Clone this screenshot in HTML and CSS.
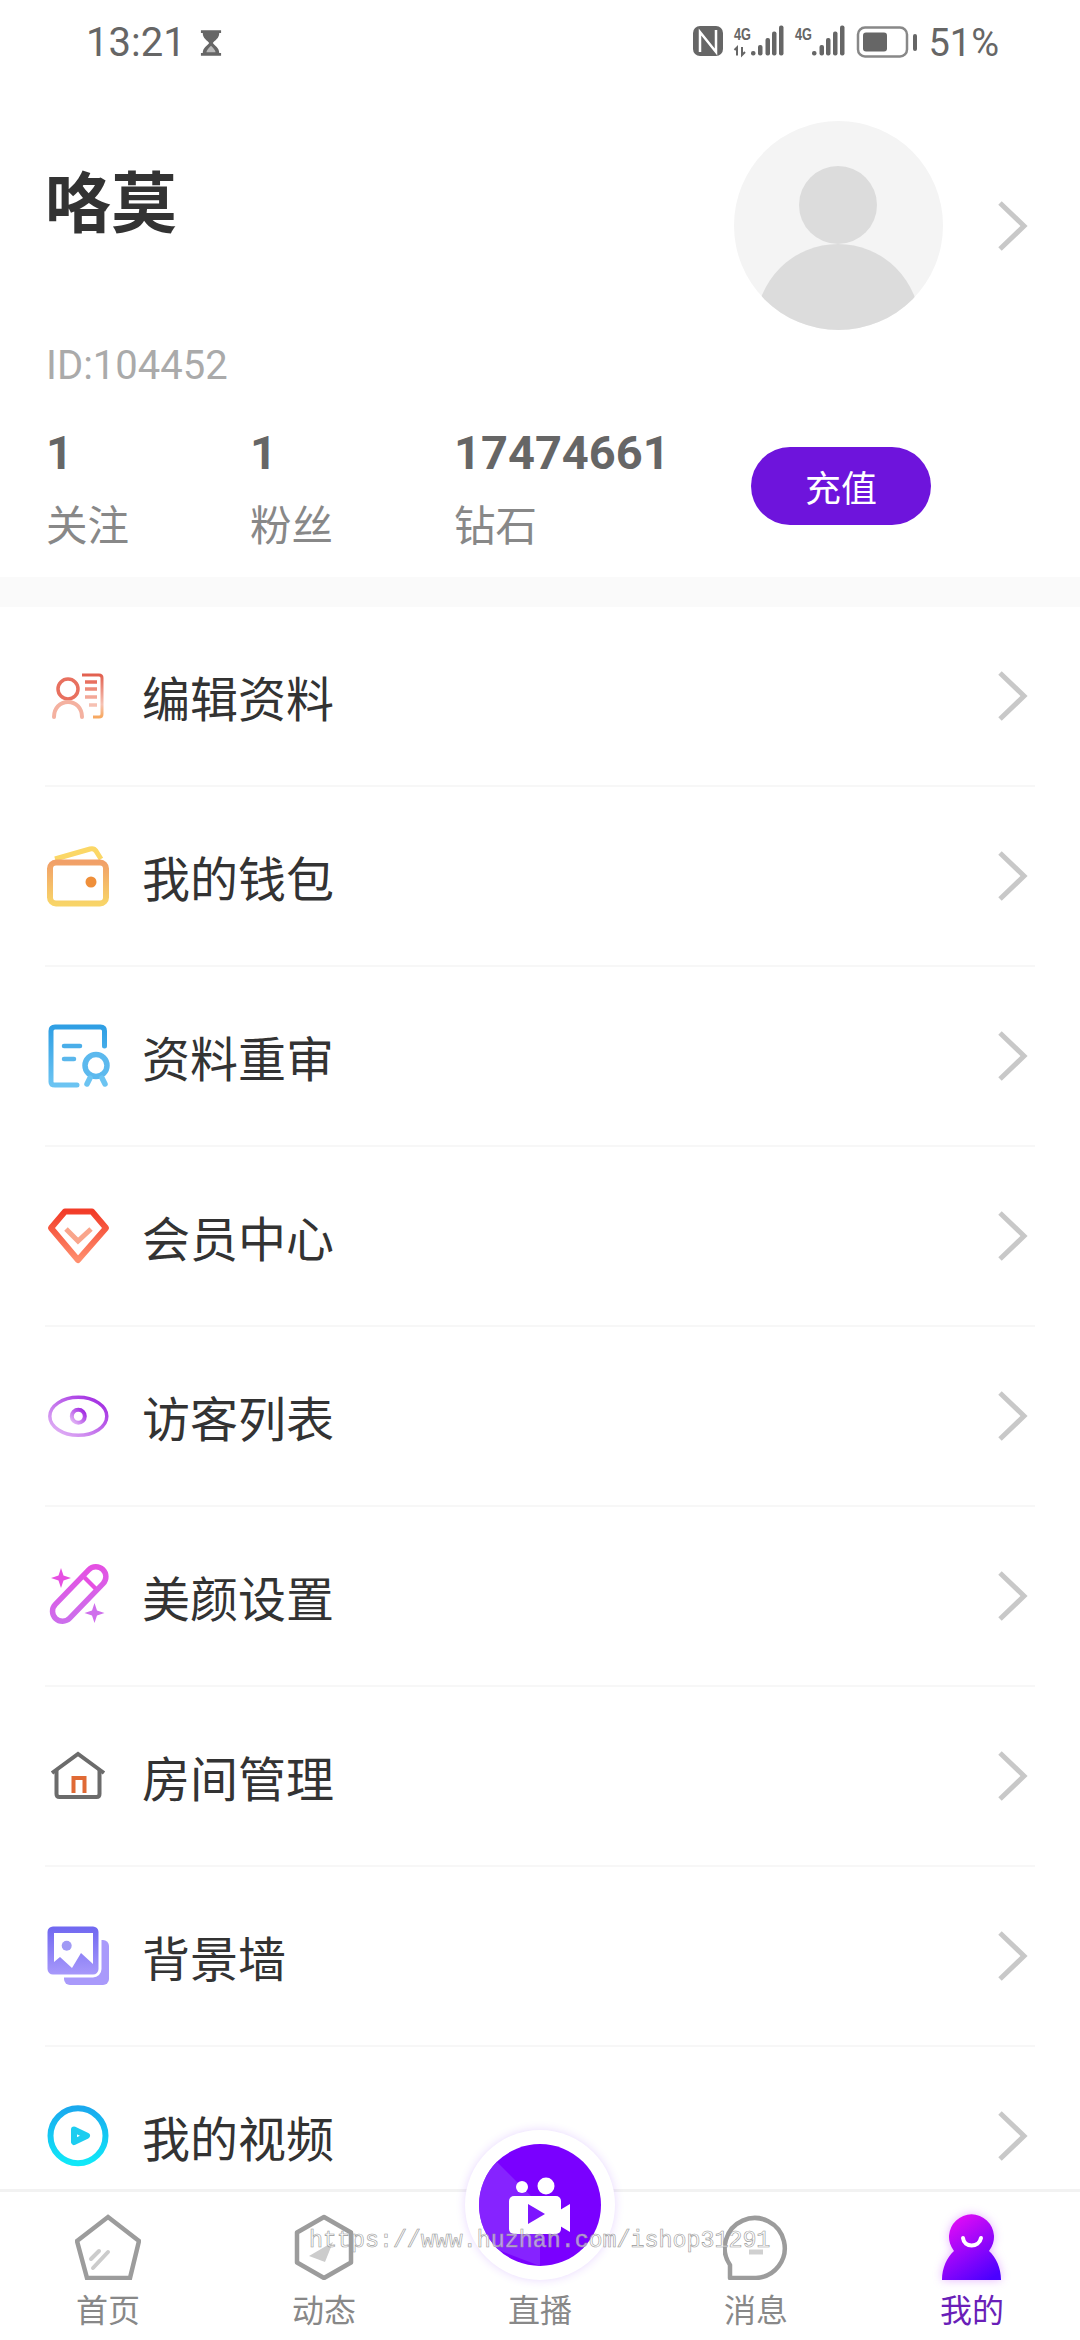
FILE: index.html
```html
<!DOCTYPE html>
<html lang="zh-CN">
<head>
    <meta charset="UTF-8">
    <title>我的</title>
    <link rel="stylesheet" href="styles.css">
</head>
<body>

<div class="page">
    <header class="status">
        <div class="status-left">
            <span class="clock">13:21</span>
            <svg width="22" height="30" viewBox="0 0 24 30"><path d="M1 1h22v3h-2c0 6-5 8-7 11 2 3 7 5 7 11h2v3H1v-3h2c0-6 5-8 7-11-2-3-7-5-7-11H1z" fill="#666"/><path d="M7 25c0-2 3-5 5-7 2 2 5 5 5 7z" fill="#fff" opacity=".55"/></svg>
        </div>
        <div class="status-right">
            <svg width="228" height="40" viewBox="0 0 228 40">
                <rect x="7" y="3" width="30" height="30" rx="7" fill="#666"/>
                <path d="M14 29V9l16 20V7" fill="none" stroke="#fff" stroke-width="2.5"/>
                <text class="net" x="48" y="16.500" textLength="17" lengthAdjust="spacingAndGlyphs">4G</text>
                <path d="M51 32.500v-8l-2.500 2.500M56 24v8l3-3" fill="none" stroke="#666" stroke-width="2"/>
                <g fill="#666">
                    <rect x="65" y="28" width="4.500" height="4.500" rx="2"/><rect x="72" y="22" width="4.500" height="10.500" rx="2"/><rect x="79.500" y="15" width="4.500" height="17.500" rx="2"/><rect x="86" y="8.500" width="4.500" height="24" rx="2"/><rect x="93" y="2.500" width="4.500" height="30" rx="2"/>
                </g>
                <text class="net" x="109" y="16.500" textLength="17" lengthAdjust="spacingAndGlyphs">4G</text>
                <g fill="#666">
                    <rect x="126" y="28" width="4.500" height="4.500" rx="2"/><rect x="133.500" y="22" width="4.500" height="10.500" rx="2"/><rect x="140" y="15" width="4.500" height="17.500" rx="2"/><rect x="147" y="8.500" width="4.500" height="24" rx="2"/><rect x="154" y="2.500" width="4.500" height="30" rx="2"/>
                </g>
                <rect x="172" y="4.500" width="49" height="29" rx="7" fill="none" stroke="#888" stroke-width="2.500"/>
                <rect x="177" y="9.500" width="24" height="19" rx="3" fill="#666"/>
            </svg>
            <span class="cap"></span>
            <span class="battery">51%</span>
        </div>
    </header>

    <section class="profile">
        <div class="profile-top">
            <h1 class="name">咯莫</h1>
            <svg class="avatar" width="209" height="209" viewBox="0 0 209 209">
                <defs><clipPath id="avatarClip"><circle cx="104.500" cy="104.500" r="104.500"/></clipPath></defs>
                <circle cx="104.500" cy="104.500" r="104.500" fill="#f4f4f4"/>
                <g clip-path="url(#avatarClip)" fill="#dcdcdc">
                    <circle cx="104" cy="84" r="39"/>
                    <ellipse cx="104" cy="205" rx="82" ry="82"/>
                </g>
            </svg>
            <svg class="chev" width="30" height="50" viewBox="0 0 30 50"><path d="M2 2l24 23L2 48" fill="none" stroke="#c8c8c8" stroke-width="5"/></svg>
        </div>
        <p class="uid">ID:104452</p>
        <div class="stats">
            <div class="stat"><b>1</b><span>关注</span></div>
            <div class="stat"><b>1</b><span>粉丝</span></div>
            <div class="stat stat-wide"><b>17474661</b><span>钻石</span></div>
            <button class="recharge">充值</button>
        </div>
    </section>

    <main class="menu">
        <div class="row">
            <svg class="ico" width="66" height="66" viewBox="0 0 66 66">
                <defs><linearGradient id="g1" x1="0" y1="0" x2="0" y2="1"><stop offset="0" stop-color="#e2604f"/><stop offset=".7" stop-color="#f6c3b4"/><stop offset="1" stop-color="#f7a860"/></linearGradient></defs>
                <circle cx="24" cy="26" r="10" fill="none" stroke="#e8705f" stroke-width="3.500"/>
                <path d="M10 54c0-9 6-15 14-15s14 6 14 15" fill="none" stroke="#f4b1a0" stroke-width="4" stroke-linecap="round"/>
                <path d="M38 12h17q3 0 3 3v36q0 3-3 3h-6" fill="none" stroke="url(#g1)" stroke-width="3"/>
                <path d="M41 19h12" stroke="#e8705f" stroke-width="3.500"/><path d="M41 26h12" stroke="#ec8a78" stroke-width="3.500"/><path d="M41 34h12" stroke="#f3a797" stroke-width="3.500"/><path d="M45 42h8" stroke="#f6c0b2" stroke-width="3.500"/>
            </svg>
            <span class="label">编辑资料</span>
            <svg class="chev" width="30" height="50" viewBox="0 0 30 50"><path d="M2 2l24 23L2 48" fill="none" stroke="#c8c8c8" stroke-width="5"/></svg>
        </div>
        <div class="row">
            <svg class="ico" width="66" height="66" viewBox="0 0 66 66">
                <defs><linearGradient id="g2" x1="0" y1="0" x2="0" y2="1"><stop offset="0" stop-color="#f1a068"/><stop offset="1" stop-color="#f8d468"/></linearGradient></defs>
                <path d="M11 16l35-10q4-1 6 2l5 8" fill="none" stroke="#fbd766" stroke-width="5"/>
                <rect x="6" y="19.500" width="56" height="41" rx="6" fill="#fff" stroke="url(#g2)" stroke-width="6"/>
                <circle cx="47" cy="39" r="5.500" fill="#ef8f3a"/>
            </svg>
            <span class="label">我的钱包</span>
            <svg class="chev" width="30" height="50" viewBox="0 0 30 50"><path d="M2 2l24 23L2 48" fill="none" stroke="#c8c8c8" stroke-width="5"/></svg>
        </div>
        <div class="row">
            <svg class="ico" width="66" height="66" viewBox="0 0 66 66">
                <defs><linearGradient id="g3" x1="0" y1="0" x2="0" y2="1"><stop offset="0" stop-color="#2f9fe4"/><stop offset="1" stop-color="#6cc4f2"/></linearGradient></defs>
                <path d="M60.500 23V8q0-4-4-4H11q-4 0-4 4v51q0 3 4 3h22" fill="none" stroke="url(#g3)" stroke-width="5" stroke-linecap="round"/>
                <path d="M20 23h16" stroke="#4aaee9" stroke-width="4.500" stroke-linecap="round"/>
                <path d="M20 36h10" stroke="#5ab7ec" stroke-width="4.500" stroke-linecap="round"/>
                <circle cx="52" cy="42.500" r="11" fill="none" stroke="#5cb9ee" stroke-width="5.500"/>
                <path d="M46 55l-3 6M58 55l3 6" stroke="#6cc4f2" stroke-width="5.500" stroke-linecap="round"/>
            </svg>
            <span class="label">资料重审</span>
            <svg class="chev" width="30" height="50" viewBox="0 0 30 50"><path d="M2 2l24 23L2 48" fill="none" stroke="#c8c8c8" stroke-width="5"/></svg>
        </div>
        <div class="row">
            <svg class="ico" width="66" height="66" viewBox="0 0 66 66">
                <defs><linearGradient id="g4" x1="0" y1="0" x2="0" y2="1"><stop offset="0" stop-color="#f23c28"/><stop offset="1" stop-color="#ff8e6e"/></linearGradient></defs>
                <path d="M21 8.500h27l14 16.500-28 32L7 25z" fill="none" stroke="url(#g4)" stroke-width="6" stroke-linejoin="round"/>
                <path d="M22 26l12 12 13-12" fill="none" stroke="#f9a58b" stroke-width="5"/>
            </svg>
            <span class="label">会员中心</span>
            <svg class="chev" width="30" height="50" viewBox="0 0 30 50"><path d="M2 2l24 23L2 48" fill="none" stroke="#c8c8c8" stroke-width="5"/></svg>
        </div>
        <div class="row">
            <svg class="ico" width="66" height="66" viewBox="0 0 66 66">
                <defs><linearGradient id="g5" x1="1" y1="0" x2="0" y2="1"><stop offset="0" stop-color="#9c1fe0"/><stop offset="1" stop-color="#e6bdf7"/></linearGradient></defs>
                <ellipse cx="34.300" cy="33.300" rx="28.500" ry="19" fill="none" stroke="url(#g5)" stroke-width="3.500"/>
                <circle cx="34.300" cy="33.300" r="6.500" fill="none" stroke="url(#g5)" stroke-width="4"/>
            </svg>
            <span class="label">访客列表</span>
            <svg class="chev" width="30" height="50" viewBox="0 0 30 50"><path d="M2 2l24 23L2 48" fill="none" stroke="#c8c8c8" stroke-width="5"/></svg>
        </div>
        <div class="row">
            <svg class="ico" width="66" height="66" viewBox="0 0 66 66">
                <defs><linearGradient id="g6" gradientUnits="userSpaceOnUse" x1="50" y1="8" x2="15" y2="58"><stop offset="0" stop-color="#e64fe2"/><stop offset="1" stop-color="#c874ee"/></linearGradient></defs>
                <rect x="1.200" y="21" width="68" height="20" rx="10" transform="rotate(-46 35.200 31)" fill="none" stroke="url(#g6)" stroke-width="5.500"/>
                <path d="M42 13l11 11-3 3-11-11z" fill="#e64fe2"/>
                <path d="M17 5l2.500 7.500L27 15l-7.500 2.500L17 25l-2.500-7.500L7 15l7.500-2.500z" fill="#e64fe2"/>
                <path d="M50.500 40l2.500 7.500L60.500 50l-7.500 2.500L50.500 60l-2.500-7.500L40.500 50l7.500-2.500z" fill="#cf6fec"/>
            </svg>
            <span class="label">美颜设置</span>
            <svg class="chev" width="30" height="50" viewBox="0 0 30 50"><path d="M2 2l24 23L2 48" fill="none" stroke="#c8c8c8" stroke-width="5"/></svg>
        </div>
        <div class="row">
            <svg class="ico" width="66" height="66" viewBox="0 0 66 66">
                <path d="M8 30L34 11l26 19" fill="none" stroke="#6b6b6b" stroke-width="4"/>
                <path d="M12.500 27v24q0 3 3 3h37q3 0 3-3V27" fill="none" stroke="#6b6b6b" stroke-width="4"/>
                <path d="M29.500 50V35h11v15" fill="none" stroke="#e06a35" stroke-width="4"/>
            </svg>
            <span class="label">房间管理</span>
            <svg class="chev" width="30" height="50" viewBox="0 0 30 50"><path d="M2 2l24 23L2 48" fill="none" stroke="#c8c8c8" stroke-width="5"/></svg>
        </div>
        <div class="row">
            <svg class="ico" width="66" height="66" viewBox="0 0 66 66">
                <defs><linearGradient id="g8" x1="0" y1="0" x2="0" y2="1"><stop offset="0" stop-color="#6e66f0"/><stop offset="1" stop-color="#a99afb"/></linearGradient></defs>
                <rect x="20" y="17" width="45" height="45" rx="6" fill="#a99afb"/>
                <rect x="2" y="2" width="54" height="51" rx="7" fill="url(#g8)" stroke="#fff" stroke-width="3"/>
                <path d="M10 10h39v31L37 30l-9 15-12-11-6 5z" fill="#fff"/>
                <circle cx="22.700" cy="22.700" r="5" fill="#a09af5"/>
            </svg>
            <span class="label">背景墙</span>
            <svg class="chev" width="30" height="50" viewBox="0 0 30 50"><path d="M2 2l24 23L2 48" fill="none" stroke="#c8c8c8" stroke-width="5"/></svg>
        </div>
        <div class="row">
            <svg class="ico" width="66" height="66" viewBox="0 0 66 66">
                <defs><linearGradient id="g9" x1="0" y1="0" x2="0" y2="1"><stop offset="0" stop-color="#1aa9ee"/><stop offset="1" stop-color="#10e8f8"/></linearGradient></defs>
                <circle cx="34" cy="32.700" r="27.500" fill="none" stroke="url(#g9)" stroke-width="6"/>
                <path d="M30 26.500L43 32.700 30 39z" fill="#fff" stroke="#1dcdf0" stroke-width="6" stroke-linejoin="round"/>
            </svg>
            <span class="label">我的视频</span>
            <svg class="chev" width="30" height="50" viewBox="0 0 30 50"><path d="M2 2l24 23L2 48" fill="none" stroke="#c8c8c8" stroke-width="5"/></svg>
        </div>
    </main>

    <nav class="tabs">
        <div class="tab">
            <svg width="66" height="66" viewBox="0 0 66 66">
                <path d="M33 3l31 24-9 37H12L2 27z" fill="none" stroke="#9c9c9c" stroke-width="4.500"/>
                <path d="M16 45l8-8M18 54l15-16" stroke="#ccc" stroke-width="4" stroke-linecap="round"/>
            </svg>
            <span>首页</span>
        </div>
        <div class="tab">
            <svg width="66" height="66" viewBox="0 0 66 66">
                <path d="M33 3l27 15.500v30L33 64 6 48.500v-30z" fill="none" stroke="#9c9c9c" stroke-width="4.500" stroke-linejoin="round"/>
                <path d="M18 42l24-14-8 20z" fill="#ccc"/>
            </svg>
            <span>动态</span>
        </div>
        <div class="tab">
            <div class="tab-gap"></div>
            <span>直播</span>
        </div>
        <div class="tab">
            <svg width="66" height="66" viewBox="0 0 66 66">
                <path d="M7 64V51A30 30 0 1 1 33 64z" fill="none" stroke="#9c9c9c" stroke-width="4.500" stroke-linejoin="round"/>
                <path d="M26 38h14" stroke="#d0d0d0" stroke-width="5"/>
            </svg>
            <span>消息</span>
        </div>
        <div class="tab tab-on">
            <svg class="me" width="66" height="66" viewBox="0 0 66 66">
                <defs><linearGradient id="gMe" x1=".2" y1="0" x2=".8" y2="1"><stop offset="0" stop-color="#e80cf5"/><stop offset="1" stop-color="#4a00ff"/></linearGradient></defs>
                <path d="M3 66c0-12 5-23 12-29a22.500 22.500 0 1 1 35 0c7 6 12 17 12 29z" fill="url(#gMe)"/>
                <path d="M24 24c1 10 16 10 18 0" fill="none" stroke="#fff" stroke-width="4" stroke-linecap="round"/>
            </svg>
            <span>我的</span>
        </div>
    </nav>

    <div class="live">
        <div class="live-inner">
            <svg width="122" height="122" viewBox="0 0 122 122">
                <path d="M61 61L17 17A61 61 0 0 0 17 105L61 122z" fill="#8a2cff" opacity=".8"/>
                <circle cx="43" cy="43" r="6" fill="#fff"/>
                <circle cx="67" cy="42" r="8.500" fill="#fff"/>
                <rect x="30" y="52" width="52" height="38" rx="5" fill="#fff"/>
                <path d="M81 66l10-6v28l-10-6z" fill="#fff"/>
                <path d="M49 60l17 10-17 10z" fill="#7d14ff"/>
            </svg>
        </div>
    </div>

    <div class="watermark">https://www.huzhan.com/ishop31291</div>
</div>

</body>
</html>
```

FILE: styles.css
```css
* {
    box-sizing: border-box;
}
body {
    margin: 0;
    background-color: #fff;
    font-family: Roboto, "Noto Sans CJK SC", sans-serif;
}
.page {
    position: relative;
    width: 1080px;
    height: 2340px;
    display: flex;
    flex-direction: column;
    overflow: hidden;
}

/* status bar */
.status {
    height: 85px;
    flex: none;
    display: flex;
    justify-content: space-between;
    align-items: center;
    color: #666;
    padding: 0 81px 0 86px;
}
.status-left {
    display: flex;
    align-items: center;
    gap: 14px;
}
.clock {
    font-size: 40px;
}
.status-right {
    display: flex;
    align-items: center;
}
.net {
    font-family: "Liberation Sans", sans-serif;
    font-size: 17px;
    font-weight: bold;
    fill: #666;
}
.cap {
    width: 4px;
    height: 17px;
    margin-left: -1px;
    margin-right: 11px;
    background-color: #666;
    border-radius: 2px;
}
.battery {
    font-size: 38px;
}

/* profile head */
.profile {
    flex: none;
    height: 492px;
    padding: 36px 52px 0 46px;
}
.profile-top {
    display: flex;
    align-items: center;
}
.name {
    margin: 0 auto 0 -1px;
    align-self: flex-start;
    padding-top: 44px;
    font-size: 66px;
    line-height: 80px;
    font-weight: bold;
    color: #333;
}
.avatar {
    margin-right: 55px;
}
.uid {
    margin: 16px 0 0;
    font-size: 40px;
    line-height: 40px;
    color: #aaa;
}
.stats {
    display: flex;
    align-items: center;
    margin-top: 42px;
}
.stat {
    width: 204px;
    display: flex;
    flex-direction: column;
    gap: 24px;
    color: #888;
    font-size: 41.500px;
    line-height: 50px;
}
.stat-wide {
    width: 296px;
}
.stat b {
    color: #666;
    font-size: 47px;
}
.recharge {
    width: 180px;
    height: 78px;
    margin-top: -8px;
    margin-left: 1px;
    border: 0;
    border-radius: 39px;
    background-color: #6e14dc;
    color: #fff;
    font-family: inherit;
    font-size: 36px;
}

/* menu list */
.menu {
    flex: 1;
    min-height: 0;
    overflow: hidden;
    padding: 0 45px;
    border-top: 30px solid #fafafa;
}
.row {
    height: 180px;
    display: flex;
    align-items: center;
    border-bottom: 2px solid #f7f7f7;
}
.ico {
    margin-left: -1px;
    flex: none;
}
.label {
    margin-left: 32px;
    font-size: 48px;
    color: #333;
}
.row .chev {
    margin-left: auto;
    margin-right: 7px;
}

/* bottom tabs */
.tabs {
    flex: none;
    height: 151px;
    display: flex;
    padding-top: 22px;
    background-color: #fff;
    border-top: 3px solid #f2f2f2;
}
.tab {
    width: 216px;
    display: flex;
    flex-direction: column;
    align-items: center;
    color: #888;
    font-size: 32px;
    line-height: 40px;
    gap: 11px;
}
.tab svg, .tab-gap {
    display: block;
    height: 66px;
    flex: none;
}
.tab-on {
    color: #6a1fb8;
}
.me {
    filter: drop-shadow(0 0 5px rgba(180, 40, 255, 0.35));
}
.live {
    position: absolute;
    left: 465px;
    top: 2130px;
    width: 150px;
    height: 150px;
    display: flex;
    align-items: center;
    justify-content: center;
    border-radius: 50%;
    background-color: #fff;
    box-shadow: 0 0 10px rgba(130, 40, 255, 0.18);
}
.live-inner {
    width: 122px;
    height: 122px;
    border-radius: 50%;
    background: #7a00ff;
    overflow: hidden;
}
.live-inner svg {
    display: block;
}
.watermark {
    position: absolute;
    left: 309px;
    top: 2226px;
    font-family: "Liberation Mono", monospace;
    font-size: 23.300px;
    line-height: 30px;
    color: rgba(255, 255, 255, 0.55);
    -webkit-text-stroke: 0.6px #999;
    white-space: nowrap;
}
```
